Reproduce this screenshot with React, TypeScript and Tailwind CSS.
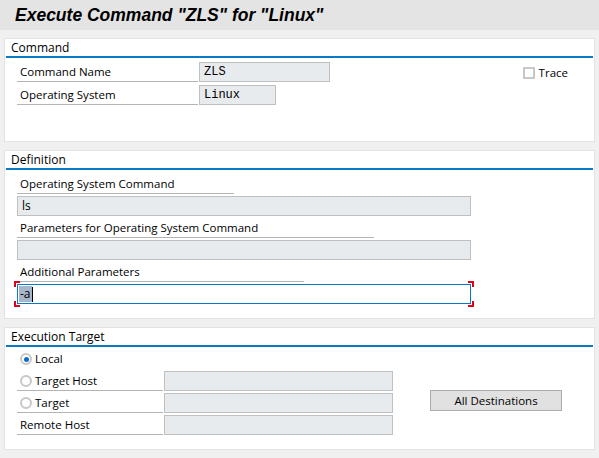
import React from "react";

const SANS = { fontFamily: "'Open Sans', 'Noto Sans', sans-serif" };

function Panel({ title, children, className = "" }: { title: string; children: React.ReactNode; className?: string }) {
  return (
    <div className={`mx-[4px] bg-white border border-[#e2e2e2] ${className}`}>
      <div className="h-[17px] pl-[6px] text-[12px] leading-[17px] text-black">{title}</div>
      <div className="mx-[1px] h-[2px] bg-[#0a7ac4]" />
      {children}
    </div>
  );
}

function Field({ value = "", w, mono = true }: { value?: string; w: string; mono?: boolean }) {
  return (
    <div
      className={`h-[20px] ${w} bg-[#e8ebee] border border-[#c0c0c0] pl-[4px] text-[12px] leading-[18px] text-black`}
      style={mono ? { fontFamily: "'Liberation Mono', monospace" } : undefined}
    >
      {value}
    </div>
  );
}

function Radio({ checked }: { checked?: boolean }) {
  return (
    <span className="w-[12px] h-[12px] rounded-full border-2 border-[#c8c8c8] bg-white flex items-center justify-center shrink-0">
      {checked && <span className="w-[5px] h-[5px] rounded-full bg-[#0a6ed1]" />}
    </span>
  );
}

const label = "h-[20px] border-b border-[#b4b4b4] pl-[3px] text-[11.5px] leading-[19px] text-black";

export default function App() {
  return (
    <div className="w-[599px] h-[458px] bg-[#f0f0f0] overflow-hidden" style={SANS}>
      <div className="h-[30px] bg-[#e4e4e4] pl-[15px] flex items-center">
        <h1
          className="text-[17.5px] font-bold italic text-black"
          style={{ fontFamily: "'Liberation Sans', Arial, sans-serif" }}
        >
          Execute Command "ZLS" for "Linux"
        </h1>
      </div>

      {/* Command */}
      <Panel title="Command" className="mt-[8px] h-[104px]">
        <div className="flex pl-[12px] pr-[26px] pt-[4px]">
          <div className="flex flex-col gap-[3px]">
            <div className="flex">
              <div className={`w-[181px] ${label}`}>Command Name</div>
              <div className="pl-[1px]"><Field value="ZLS" w="w-[131px]" /></div>
            </div>
            <div className="flex">
              <div className={`w-[181px] ${label}`}>Operating System</div>
              <div className="pl-[1px]"><Field value="Linux" w="w-[77px]" /></div>
            </div>
          </div>
          <div className="ml-auto flex items-center gap-[4px] h-[20px] mt-[1px]">
            <span className="w-[12px] h-[12px] border-2 border-[#c8c8c8] bg-white" />
            <span className="text-[11.5px]">Trace</span>
          </div>
        </div>
      </Panel>

      {/* Definition */}
      <Panel title="Definition" className="mt-[8px] h-[169px]">
        <div className="pl-[12px] pt-[4px] flex flex-col">
          <div className={`w-[217px] ${label}`}>Operating System Command</div>
          <div className="mt-[2px]"><Field value="ls" w="w-[454px]" mono={false} /></div>
          <div className={`mt-[2px] w-[357px] ${label}`}>Parameters for Operating System Command</div>
          <div className="mt-[2px]"><Field w="w-[454px]" /></div>
          <div className={`mt-[2px] w-[287px] ${label}`}>Additional Parameters</div>
          <div className="mt-[2px] relative w-[454px] h-[20px] border border-[#0a7ac4] bg-white pl-[1px] text-[12px] leading-[18px] flex items-center">
            <span className="bg-[#a6b7cc] h-[16px] leading-[16px] px-[1px]">-a</span>
            <span className="w-[1px] h-[15px] bg-black" />
            <span className="absolute -left-[4px] -top-[4px] w-[6px] h-[6px] border-l-2 border-t-2 border-[#e0001a]" />
            <span className="absolute -left-[4px] -bottom-[4px] w-[6px] h-[6px] border-l-2 border-b-2 border-[#e0001a]" />
            <span className="absolute -right-[4px] -top-[4px] w-[6px] h-[6px] border-r-2 border-t-2 border-[#e0001a]" />
            <span className="absolute -right-[4px] -bottom-[4px] w-[6px] h-[6px] border-r-2 border-b-2 border-[#e0001a]" />
          </div>
        </div>
      </Panel>

      {/* Execution Target */}
      <Panel title="Execution Target" className="mt-[8px] h-[123px]">
        <div className="flex pl-[12px] pt-[2px]">
          <div className="flex flex-col gap-[2px]">
            <div className="flex items-center gap-[3px] h-[20px] pl-[3px] text-[11.5px]">
              <Radio checked />
              <span>Local</span>
            </div>
            <div className="flex">
              <div className={`w-[146px] ${label} flex items-center gap-[3px]`}>
                <Radio />
                <span>Target Host</span>
              </div>
              <div className="pl-[1px]"><Field w="w-[229px]" /></div>
            </div>
            <div className="flex">
              <div className={`w-[146px] ${label} flex items-center gap-[3px]`}>
                <Radio />
                <span>Target</span>
              </div>
              <div className="pl-[1px]"><Field w="w-[229px]" /></div>
            </div>
            <div className="flex">
              <div className={`w-[146px] ${label}`}>Remote Host</div>
              <div className="pl-[1px]"><Field w="w-[229px]" /></div>
            </div>
          </div>
          <div className="ml-[37px] pt-[38px]">
            <button className="w-[132px] h-[21px] bg-[#e1e1e1] border border-[#adadad] text-[11.5px] leading-[19px] text-black">
              All Destinations
            </button>
          </div>
        </div>
      </Panel>
    </div>
  );
}
